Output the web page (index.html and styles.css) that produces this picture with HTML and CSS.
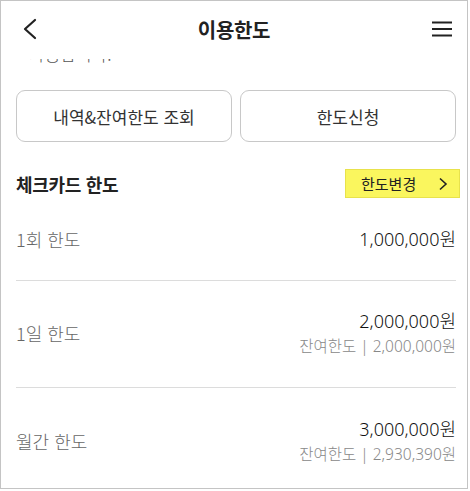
FILE: index.html
```html
<!DOCTYPE html>
<html lang="ko">
<head>
<meta charset="utf-8">
<link rel="stylesheet" href="styles.css">
</head>
<body>
<div class="frame">
  <header class="topbar">
    <svg class="back" width="14" height="22" viewBox="0 0 14 22"><polyline points="12,2 2,11 12,20" fill="none" stroke="#222" stroke-width="2.2" stroke-linecap="round" stroke-linejoin="round"/></svg>
    <h1 class="title">이용한도</h1>
    <svg class="menu" width="22" height="16" viewBox="0 0 22 16"><path d="M1 1.5H21M1 8H21M1 14.5H21" stroke="#222" stroke-width="2.2"/></svg>
  </header>
  <div class="clip"><p class="cut">가능합니다.</p></div>
  <div class="content">
    <div class="btns">
      <button class="obtn">내역&amp;잔여한도 조회</button>
      <button class="obtn">한도신청</button>
    </div>
    <div class="sec">
      <h2 class="sec-title">체크카드 한도</h2>
      <button class="ybtn">한도변경<svg width="10" height="14" viewBox="0 0 10 14"><polyline points="2,1.5 8,7 2,12.5" fill="none" stroke="#222" stroke-width="1.6"/></svg></button>
    </div>
    <div class="row r1">
      <span class="lbl">1회 한도</span>
      <div class="val"><span class="amt">1,000,000원</span></div>
    </div>
    <div class="row r2">
      <span class="lbl">1일 한도</span>
      <div class="val"><span class="amt">2,000,000원</span><span class="sub">잔여한도 | 2,000,000원</span></div>
    </div>
    <div class="row r3">
      <span class="lbl">월간 한도</span>
      <div class="val"><span class="amt">3,000,000원</span><span class="sub">잔여한도 | 2,930,390원</span></div>
    </div>
  </div>
</div>
</body>
</html>
```
FILE: styles.css
```css
* { box-sizing: border-box; }
html, body { margin: 0; padding: 0; background: #fff; }
body { font-family: "Noto Sans CJK KR", "Noto Sans", sans-serif; color: #222; }
.frame {
  width: 468px; height: 489px;
  border: 1px solid #c4c4c4;
  overflow: hidden;
  position: relative;
}
.topbar {
  height: 56px;
  display: flex; align-items: center; justify-content: space-between;
  padding: 0 14px 0 22px;
}
.title { margin: 0; font-size: 20px; font-weight: 700; letter-spacing: -0.3px; color: #222; }
.back { display: block; }
.menu { display: block; }
.clip { height: 8px; margin-top: 2px; overflow: hidden; padding-left: 28px; }
.cut { margin: -17px 0 0; font-size: 17px; line-height: 24px; color: #555; font-weight: 300; }
.content { padding: 23px 11px 0 15px; }
.btns { display: flex; gap: 8px; }
.obtn {
  flex: 1; height: 52px;
  border: 1px solid #c8c8c8; border-radius: 9px; background: #fff;
  font-family: inherit; font-size: 17px; color: #333;
}
.sec { display: flex; justify-content: space-between; align-items: center; margin-top: 27px; margin-right: -4px; }
.sec-title { margin: 0; font-size: 18px; font-weight: 700; color: #222; letter-spacing: -0.3px; }
.ybtn {
  width: 115px; height: 29px;
  background: #faf65e; border: 1px solid #e8e24c;
  font-family: inherit; font-size: 15px; color: #222;
  display: flex; align-items: center; justify-content: space-between;
  padding: 0 11px 0 15px;
}
.row { display: flex; justify-content: space-between; align-items: center; }
.r1 { height: 83px; border-bottom: 1px solid #dcdcdc; }
.r2 { height: 107px; border-bottom: 1px solid #dcdcdc; padding-bottom: 2px; }
.r3 { height: 106px; }
.lbl { font-size: 18px; color: #666; font-weight: 300; }
.val { display: flex; flex-direction: column; align-items: flex-end; }
.amt { font-family: "Noto Sans", "Noto Sans CJK KR", sans-serif; font-size: 18px; color: #111; line-height: 25px; font-weight: 300; }
.sub { font-family: "Noto Sans", "Noto Sans CJK KR", sans-serif; font-size: 15.5px; color: #888; line-height: 24px; font-weight: 300; }
```
